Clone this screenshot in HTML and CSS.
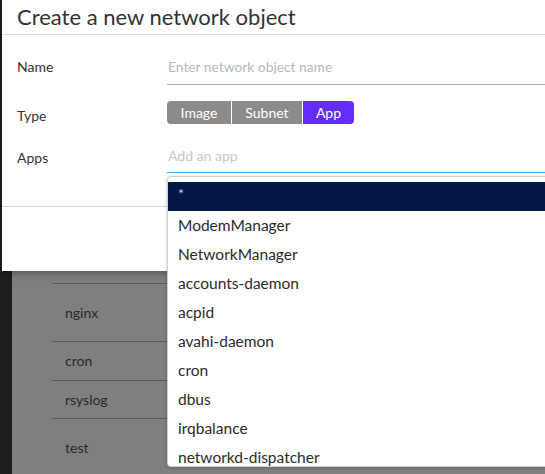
FILE: index.html
```html
<!DOCTYPE html>
<html>
<head>
<meta charset="utf-8">
<link rel="stylesheet" href="styles.css">
</head>
<body>
<div class="page">
  <div class="sidebar"></div>
  <div class="main">
    <div class="table">
      <div class="row tall"><span class="cell"></span></div>
      <div class="row tall"><span class="cell">nginx</span></div>
      <div class="row short"><span class="cell">cron</span></div>
      <div class="row short"><span class="cell">rsyslog</span></div>
      <div class="row tall"><span class="cell">test</span></div>
    </div>
  </div>
</div>

<div class="modal">
  <div class="modal-header">
    <h1 class="modal-title">Create a new network object</h1>
  </div>
  <div class="modal-body">
    <div class="form-row name-row">
      <label class="form-label">Name</label>
      <div class="field"><span class="placeholder">Enter network object name</span></div>
    </div>
    <div class="form-row type-row">
      <label class="form-label">Type</label>
      <div class="btn-group">
        <span class="seg">Image</span>
        <span class="seg">Subnet</span>
        <span class="seg active">App</span>
      </div>
    </div>
    <div class="form-row apps-row">
      <label class="form-label">Apps</label>
      <div class="field focused"><span class="placeholder">Add an app</span></div>
    </div>
  </div>
  <div class="modal-footer"></div>
</div>

<ul class="dropdown">
  <li class="item selected">*</li>
  <li class="item">ModemManager</li>
  <li class="item">NetworkManager</li>
  <li class="item">accounts-daemon</li>
  <li class="item">acpid</li>
  <li class="item">avahi-daemon</li>
  <li class="item">cron</li>
  <li class="item">dbus</li>
  <li class="item">irqbalance</li>
  <li class="item">networkd-dispatcher</li>
</ul>
</body>
</html>
```

FILE: styles.css
```css
* { box-sizing: border-box; }
html, body { margin: 0; padding: 0; }
body {
  width: 545px;
  height: 474px;
  overflow: hidden;
  background: #1d1e20;
  font-family: "Lato", "Open Sans", sans-serif;
  color: #333;
  position: relative;
}
.page {
  display: flex;
  height: 474px;
}
.sidebar {
  width: 12px;
  flex: none;
  background: #1d1e20;
}
.main {
  flex: 1;
  background: #7f7f7f;
  padding-left: 40px;
}
.table {
  padding-top: 226px;
}
.row {
  display: flex;
  align-items: center;
  border-bottom: 1px solid #585d61;
  padding-left: 13px;
  font-size: 14px;
  color: #2a2a2a;
}
.row.tall { height: 58px; }
.row.short { height: 38.5px; }

.modal {
  position: absolute;
  left: 2px;
  top: 0;
  width: 600px;
  height: 271px;
  background: #fff;
  box-shadow: 0 2px 8px rgba(0,0,0,0.35);
  display: flex;
  flex-direction: column;
}
.modal-header {
  height: 35px;
  border-bottom: 1px solid #dcdcdc;
  padding-left: 15px;
}
.modal-title {
  margin: 0;
  font-size: 22px;
  font-weight: 400;
  line-height: 35px;
  color: #333;
  position: relative;
  top: -1px;
}
.modal-body {
  height: 172px;
  border-bottom: 1px solid #d6d6d6;
  padding-left: 15px;
  padding-top: 15px;
}
.form-row {
  display: flex;
}
.form-label {
  width: 150px;
  flex: none;
  font-size: 14px;
  color: #333;
}
.name-row {
  height: 35px;
  align-items: center;
}
.name-row .form-label {
  position: relative;
  top: -1px;
}
.field {
  flex: 1;
  height: 100%;
  border-bottom: 1px solid #a7b3bb;
  display: flex;
  align-items: center;
  padding-left: 1px;
}
.placeholder {
  font-size: 13.8px;
  color: #b2bac1;
  position: relative;
  top: -1px;
}
.type-row {
  margin-top: 16px;
  height: 24px;
}
.type-row .form-label {
  padding-top: 6px;
}
.btn-group {
  display: flex;
  height: 23px;
  border-radius: 4px;
  overflow: hidden;
}
.seg {
  background: #8b8b8b;
  color: #fff;
  font-size: 14px;
  display: flex;
  align-items: center;
  justify-content: center;
  border-right: 1px solid #fff;
}
.seg:nth-child(1) { width: 65px; }
.seg:nth-child(2) { width: 71px; }
.seg.active {
  width: 51px;
  border-right: none;
  background: #652bff;
}
.apps-row {
  margin-top: 16px;
  height: 32px;
  align-items: center;
}
.field.focused {
  border-bottom: 1px solid #5aa9e8;
}
.field.focused .placeholder { color: #c4cace; font-size: 14px; }

.dropdown {
  position: absolute;
  left: 167px;
  top: 176px;
  width: 420px;
  height: 291px;
  margin: 0;
  padding: 5px 0 0 0;
  list-style: none;
  background: #fff;
  border: 1px solid #cfcfcf;
  border-radius: 4px;
  box-shadow: 0 1px 4px rgba(0,0,0,0.2);
  overflow: hidden;
}
.item {
  height: 29px;
  line-height: 29px;
  padding-left: 10px;
  font-size: 15.5px;
  color: #2b2b2b;
  white-space: nowrap;
}
.item.selected {
  background: #031745;
  color: #c8cbd4;
  font-size: 14px;
  line-height: 24px;
}
```
